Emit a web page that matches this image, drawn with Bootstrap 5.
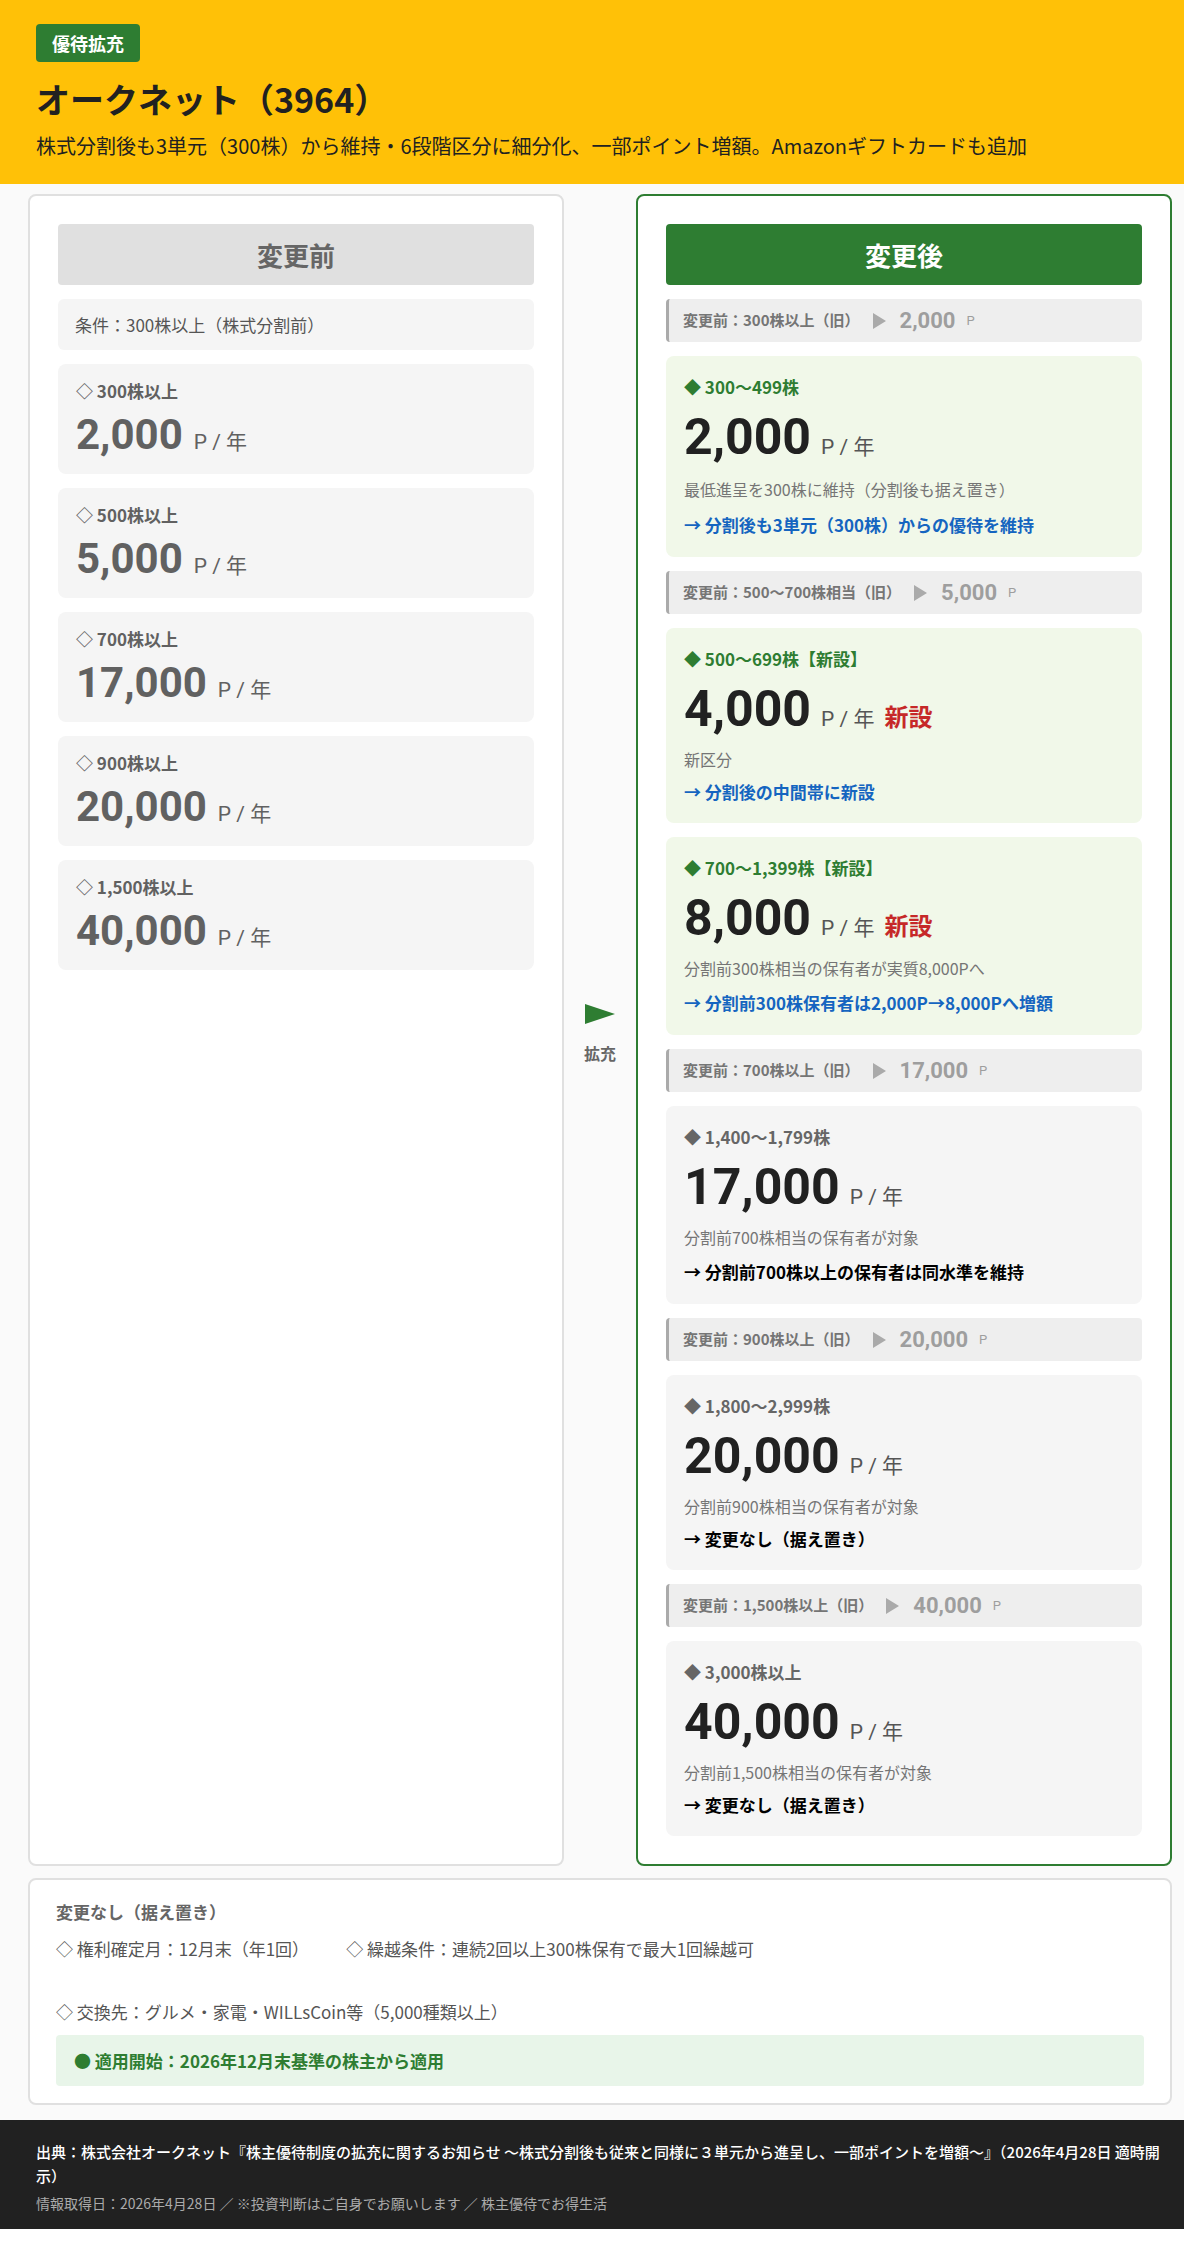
<!DOCTYPE html>
<html lang="ja">
<head>
    <meta charset="UTF-8">
    <title>オークネット（3964）</title>
    <link href="https://cdn.jsdelivr.net/npm/bootstrap@5.3.3/dist/css/bootstrap.min.css" rel="stylesheet">
    <style>
        body { font-family: "Noto Sans CJK JP", "Noto Sans", sans-serif; background: #fff; color: #212121; }
        .page-wrap { width: 1184px; background: #fafafa; }
        .top-band { background: #ffc107; height: 184px; padding: 24px 36px 0; }
        .top-tag { background: #2e7d32; color: #fff; font-size: 18px; line-height: 38px; height: 38px; padding: 0 16px; border-radius: 4px; font-weight: 700; }
        .top-title { font-size: 34px; font-weight: 700; line-height: 50px; margin: 12px 0 0; }
        .top-sub { font-size: 20px; line-height: 30px; margin: 7px 0 0; color: #212121; }

        .compare { padding: 10px 12px 0 28px; }
        .panel-box { flex: 1 1 0; background: #fff; border: 2px solid #e0e0e0; border-radius: 8px; padding: 28px; }
        .panel-new { border-color: #2e7d32; }
        .arrow-col { flex: 0 0 72px; color: #666; font-size: 16px; font-weight: 700; gap: 17px; padding-top: 8px; }
        .panel-stack { gap: 14px; }
        .panel-head { height: 61px; line-height: 61px; font-size: 26px; font-weight: 700; text-align: center; border-radius: 4px; }
        .head-old { background: #e0e0e0; color: #666; }
        .head-new { background: #2e7d32; color: #fff; }
        .cond-box { height: 51px; line-height: 51px; background: #f5f5f5; border-radius: 6px; padding: 0 17px; font-size: 17px; color: #555; }

        .tier-old { background: #f5f5f5; border-radius: 8px; padding: 15px 18px 11px; height: 110px; color: #616161; }
        .tier-old .tier-label { font-size: 17px; font-weight: 700; line-height: 24px; color: #616161; }
        .tier-old .tier-value { font-size: 42px; line-height: 56px; margin-top: 4px; }
        .tier-old .tier-unit { font-size: 21px; color: #616161; margin-left: 3px; }

        .tier-box { background: #f5f5f5; border-radius: 8px; padding: 19px 19px 20px 18px; }
        .tier-green { background: #f1f8e9; }
        .tier-label { font-size: 17px; font-weight: 700; line-height: 24px; color: #666; }
        .tier-green .tier-label { color: #2e7d32; }
        .tier-row { margin-top: 5px; gap: 8px; }
        .tier-value { font-family: Roboto, sans-serif; font-weight: 700; font-size: 50px; line-height: 66px; }
        .tier-unit { font-family: Roboto, "Noto Sans CJK JP", sans-serif; font-size: 21px; color: #555; margin-left: 2px; }
        .tier-new { font-size: 24px; font-weight: 700; color: #c62828; margin-left: 2px; }
        .tier-note { font-size: 16px; line-height: 23px; margin-top: 6px; color: #757575; }
        .tier-result { font-size: 17px; font-weight: 700; line-height: 22px; margin-top: 10px; color: #000; }
        .tier-green .tier-result { color: #1565c0; }
        .line-tall { line-height: 25px; }
        .tier-note.line-tall { line-height: 26px; }

        .was-row { height: 43px; background: #eee; border-left: 3px solid #aaa; border-radius: 4px; padding-left: 14px; color: #757575; font-size: 15px; font-weight: 700; }
        .was-tri { margin: 0 14px 0 13px; }
        .was-value { font-family: Roboto, sans-serif; font-size: 22px; color: #9e9e9e; }
        .was-unit { font-family: Roboto, sans-serif; font-size: 13px; font-weight: 400; color: #9e9e9e; margin-left: 11px; }

        .keep-box { margin: 12px 12px 0 28px; background: #fff; border: 2px solid #e0e0e0; border-radius: 8px; padding: 18px 26px 18px; height: 227px; color: #555; font-size: 17px; }
        .keep-title { font-size: 17px; font-weight: 700; line-height: 28px; color: #666; }
        .keep-line { line-height: 31px; margin-top: 7px; }
        .keep-line span + span { margin-left: 37px; }
        .keep-gap { margin-top: 32px; }
        .keep-start { background: #e8f5e9; color: #2e7d32; font-weight: 700; height: 51px; line-height: 51px; padding: 0 18px; border-radius: 4px; margin-top: 8px; font-size: 17px; }

        .foot-band { background: #212121; color: #fff; margin-top: 15px; height: 109px; padding: 20px 20px 0 36px; }
        .foot-main { font-size: 15px; font-weight: 500; line-height: 24px; }
        .foot-sub { font-size: 14px; line-height: 22px; margin-top: 4px; color: #aaa; }
    </style>
</head>
<body class="m-0">
    <div class="page-wrap">
        <div class="top-band">
            <span class="top-tag d-inline-block">優待拡充</span>
            <h1 class="top-title">オークネット（3964）</h1>
            <p class="top-sub">株式分割後も3単元（300株）から維持・6段階区分に細分化、一部ポイント増額。Amazonギフトカードも追加</p>
        </div>

        <div class="compare d-flex">
            <div class="panel-box">
                <div class="panel-stack d-flex flex-column">
                    <div class="panel-head head-old">変更前</div>
                    <div class="cond-box">条件：300株以上（株式分割前）</div>
                    <div class="tier-old">
                        <div class="tier-label">◇ 300株以上</div>
                        <div class="d-flex align-items-baseline gap-2"><span class="tier-value">2,000</span><span class="tier-unit">P / 年</span></div>
                    </div>
                    <div class="tier-old">
                        <div class="tier-label">◇ 500株以上</div>
                        <div class="d-flex align-items-baseline gap-2"><span class="tier-value">5,000</span><span class="tier-unit">P / 年</span></div>
                    </div>
                    <div class="tier-old">
                        <div class="tier-label">◇ 700株以上</div>
                        <div class="d-flex align-items-baseline gap-2"><span class="tier-value">17,000</span><span class="tier-unit">P / 年</span></div>
                    </div>
                    <div class="tier-old">
                        <div class="tier-label">◇ 900株以上</div>
                        <div class="d-flex align-items-baseline gap-2"><span class="tier-value">20,000</span><span class="tier-unit">P / 年</span></div>
                    </div>
                    <div class="tier-old">
                        <div class="tier-label">◇ 1,500株以上</div>
                        <div class="d-flex align-items-baseline gap-2"><span class="tier-value">40,000</span><span class="tier-unit">P / 年</span></div>
                    </div>
                </div>
            </div>

            <div class="arrow-col d-flex flex-column align-items-center justify-content-center">
                <svg width="30" height="20" viewBox="0 0 30 20"><polygon points="0,0 30,10 0,20" fill="#2e7d32"/></svg>
                <span>拡充</span>
            </div>

            <div class="panel-box panel-new">
                <div class="panel-stack d-flex flex-column">
                    <div class="panel-head head-new">変更後</div>

                    <div class="was-row d-flex align-items-center">変更前：300株以上（旧）
                        <svg class="was-tri" width="13" height="16" viewBox="0 0 13 16"><polygon points="0,0 13,8 0,16" fill="#aaa"/></svg>
                        <span class="was-value">2,000</span><span class="was-unit">P</span>
                    </div>
                    <div class="tier-box tier-green">
                        <div class="tier-label">◆ 300〜499株</div>
                        <div class="tier-row d-flex align-items-baseline"><span class="tier-value">2,000</span><span class="tier-unit">P / 年</span></div>
                        <div class="tier-note line-tall">最低進呈を300株に維持（分割後も据え置き）</div>
                        <div class="tier-result line-tall">→ 分割後も3単元（300株）からの優待を維持</div>
                    </div>

                    <div class="was-row d-flex align-items-center">変更前：500〜700株相当（旧）
                        <svg class="was-tri" width="13" height="16" viewBox="0 0 13 16"><polygon points="0,0 13,8 0,16" fill="#aaa"/></svg>
                        <span class="was-value">5,000</span><span class="was-unit">P</span>
                    </div>
                    <div class="tier-box tier-green">
                        <div class="tier-label">◆ 500〜699株【新設】</div>
                        <div class="tier-row d-flex align-items-baseline"><span class="tier-value">4,000</span><span class="tier-unit">P / 年</span><span class="tier-new">新設</span></div>
                        <div class="tier-note">新区分</div>
                        <div class="tier-result">→ 分割後の中間帯に新設</div>
                    </div>

                    <div class="tier-box tier-green">
                        <div class="tier-label">◆ 700〜1,399株【新設】</div>
                        <div class="tier-row d-flex align-items-baseline"><span class="tier-value">8,000</span><span class="tier-unit">P / 年</span><span class="tier-new">新設</span></div>
                        <div class="tier-note">分割前300株相当の保有者が実質8,000Pへ</div>
                        <div class="tier-result line-tall">→ 分割前300株保有者は2,000P→8,000Pへ増額</div>
                    </div>

                    <div class="was-row d-flex align-items-center">変更前：700株以上（旧）
                        <svg class="was-tri" width="13" height="16" viewBox="0 0 13 16"><polygon points="0,0 13,8 0,16" fill="#aaa"/></svg>
                        <span class="was-value">17,000</span><span class="was-unit">P</span>
                    </div>
                    <div class="tier-box">
                        <div class="tier-label">◆ 1,400〜1,799株</div>
                        <div class="tier-row d-flex align-items-baseline"><span class="tier-value">17,000</span><span class="tier-unit">P / 年</span></div>
                        <div class="tier-note">分割前700株相当の保有者が対象</div>
                        <div class="tier-result line-tall">→ 分割前700株以上の保有者は同水準を維持</div>
                    </div>

                    <div class="was-row d-flex align-items-center">変更前：900株以上（旧）
                        <svg class="was-tri" width="13" height="16" viewBox="0 0 13 16"><polygon points="0,0 13,8 0,16" fill="#aaa"/></svg>
                        <span class="was-value">20,000</span><span class="was-unit">P</span>
                    </div>
                    <div class="tier-box">
                        <div class="tier-label">◆ 1,800〜2,999株</div>
                        <div class="tier-row d-flex align-items-baseline"><span class="tier-value">20,000</span><span class="tier-unit">P / 年</span></div>
                        <div class="tier-note">分割前900株相当の保有者が対象</div>
                        <div class="tier-result">→ 変更なし（据え置き）</div>
                    </div>

                    <div class="was-row d-flex align-items-center">変更前：1,500株以上（旧）
                        <svg class="was-tri" width="13" height="16" viewBox="0 0 13 16"><polygon points="0,0 13,8 0,16" fill="#aaa"/></svg>
                        <span class="was-value">40,000</span><span class="was-unit">P</span>
                    </div>
                    <div class="tier-box">
                        <div class="tier-label">◆ 3,000株以上</div>
                        <div class="tier-row d-flex align-items-baseline"><span class="tier-value">40,000</span><span class="tier-unit">P / 年</span></div>
                        <div class="tier-note">分割前1,500株相当の保有者が対象</div>
                        <div class="tier-result">→ 変更なし（据え置き）</div>
                    </div>
                </div>
            </div>
        </div>

        <div class="keep-box">
            <div class="keep-title">変更なし（据え置き）</div>
            <div class="keep-line"><span>◇ 権利確定月：12月末（年1回）</span><span>◇ 繰越条件：連続2回以上300株保有で最大1回繰越可</span></div>
            <div class="keep-line keep-gap">◇ 交換先：グルメ・家電・WILLsCoin等（5,000種類以上）</div>
            <div class="keep-start">● 適用開始：2026年12月末基準の株主から適用</div>
        </div>

        <div class="foot-band">
            <div class="foot-main">出典：株式会社オークネット『株主優待制度の拡充に関するお知らせ ～株式分割後も従来と同様に３単元から進呈し、一部ポイントを増額～』（2026年4月28日 適時開示）</div>
            <div class="foot-sub">情報取得日：2026年4月28日 ／ ※投資判断はご自身でお願いします ／ 株主優待でお得生活</div>
        </div>
    </div>

    <script src="https://cdn.jsdelivr.net/npm/bootstrap@5.3.3/dist/js/bootstrap.bundle.min.js"></script>
</body>
</html>
